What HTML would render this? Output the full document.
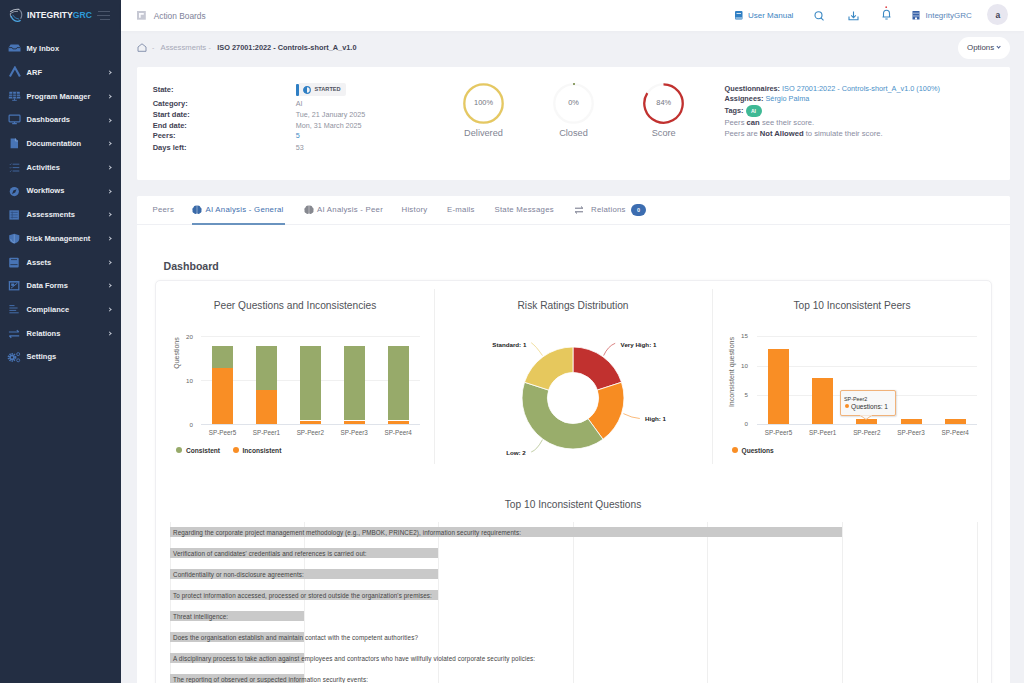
<!DOCTYPE html>
<html><head><meta charset="utf-8">
<style>
*{box-sizing:border-box;margin:0;padding:0}
html,body{width:1024px;height:683px;overflow:hidden}
body{font-family:"Liberation Sans",sans-serif;background:#f0f1f5;position:relative;color:#3f4254}
.a{position:absolute;white-space:nowrap}
#sb{position:absolute;left:0;top:0;width:121px;height:683px;background:#232e43}
#hd{position:absolute;left:121px;top:0;width:903px;height:31px;background:#fff;box-shadow:0 1px 3px rgba(0,0,0,0.025)}
.mi{position:absolute;left:26.6px;font-size:7.5px;color:#eceef4;font-weight:bold;line-height:10px;white-space:nowrap}
.chev{position:absolute;left:108px;width:3px;height:3px;border-right:0.9px solid #c3c8d3;border-top:0.9px solid #c3c8d3;transform:rotate(45deg)}
.card{position:absolute;background:#fff;border-radius:1.5px}
.lbl{position:absolute;left:152.7px;font-size:7.5px;font-weight:bold;color:#3f4254;line-height:9px}
.val{position:absolute;left:295.7px;font-size:7.2px;color:#8f92a0;line-height:9px}
.tab{position:absolute;top:204.6px;font-size:7.8px;letter-spacing:0.25px;color:#7e8299;line-height:10px;white-space:nowrap}
.gl{position:absolute;height:1px;background:#ededed}
.vl{position:absolute;width:1px;background:#efefef}
.ax{position:absolute;font-size:6.2px;color:#666;line-height:8px;white-space:nowrap}
.row{position:absolute;left:170px;height:9.9px;background:#c9c9c9}
.rt{position:absolute;left:173px;font-size:6.3px;letter-spacing:0.1px;color:#444;line-height:9px;white-space:nowrap}
.ttl{position:absolute;font-size:10.2px;color:#505258;line-height:12px;white-space:nowrap;text-align:center}
</style></head><body>

<div id="sb">
<svg class="a" style="left:9px;top:8px" width="15" height="15" viewBox="0 0 15 15">
<path d="M9.9 1.2 Q14.6 5.2 11.6 10.8" stroke="#7a8599" stroke-width="1.1" fill="none"/>
<path d="M1.2 3.8 Q5 0.6 10 1.4" stroke="#b9bfca" stroke-width="1.2" fill="none"/>
<path d="M1.6 5.4 Q5 2.9 9 3.3" stroke="#9aa2b0" stroke-width="0.9" fill="none"/>
<path d="M1.5 5 Q0.8 7.5 2.2 9.5" stroke="#8c95a5" stroke-width="1.1" fill="none"/>
<path d="M2 8 Q3.8 12.8 8.3 13.4 Q10.3 13.3 11.6 12.2" stroke="#4ba5e2" stroke-width="1.3" fill="none"/>
<path d="M3.6 6.8 Q5.6 10.8 10.2 11.2" stroke="#3a85c0" stroke-width="0.9" fill="none"/>
</svg>
<div class="a" style="left:26.6px;top:10.4px;font-size:9.2px;font-weight:bold;color:#f2f3f7;line-height:10px;transform:scaleX(0.935);transform-origin:0 0">INTEGRITY<span style="color:#2d9ad9">GRC</span></div>
<div class="a" style="left:98px;top:11px;width:12px;height:1px;background:#4b566b"></div>
<div class="a" style="left:96.5px;top:15px;width:13.5px;height:1px;background:#4b566b"></div>
<div class="a" style="left:100px;top:19px;width:10px;height:1px;background:#4b566b"></div>
<svg class="a" style="left:7px;top:42.3px" width="15" height="13" viewBox="0 0 15 13"><path d="M1.6 5.6 L3.6 2.4 H11.5 L13.5 5.6 V9.6 H1.6Z" fill="#4874b5"/><path d="M1.6 5.6 H5.1 L5.9 6.9 H9.2 L10 5.6 H13.5" stroke="#232e43" stroke-width="0.9" fill="none"/></svg>
<div class="mi" style="top:44.2px">My Inbox</div>
<svg class="a" style="left:7px;top:66.0px" width="15" height="13" viewBox="0 0 15 13"><path d="M2.9 10.6 L7.9 1.6 L12.9 10.6" stroke="#4874b5" stroke-width="2.1" fill="none"/></svg>
<div class="mi" style="top:68.0px">ARF</div>
<div class="chev" style="top:71.1px"></div>
<svg class="a" style="left:7px;top:89.7px" width="15" height="13" viewBox="0 0 15 13"><path d="M2.4 1.8 H12.7 L13.4 8.4 H1.7Z" fill="#4874b5"/><path d="M2 4.2 H13.1 M2 6.3 H13.1 M5.7 1.8 V8.4 M9.4 1.8 V8.4" stroke="#232e43" stroke-width="0.8"/><path d="M7.5 8.4 V10.2 M5.2 10.3 H9.8" stroke="#4874b5" stroke-width="0.9"/></svg>
<div class="mi" style="top:91.6px">Program Manager</div>
<div class="chev" style="top:94.8px"></div>
<svg class="a" style="left:7px;top:113.4px" width="15" height="13" viewBox="0 0 15 13"><rect x="2.1" y="2.1" width="10.9" height="6.8" rx="0.8" fill="none" stroke="#4874b5" stroke-width="1.2"/><path d="M7.5 8.9 V10.4 M5.2 10.6 H9.8" stroke="#4874b5" stroke-width="1.1"/></svg>
<div class="mi" style="top:115.3px">Dashboards</div>
<div class="chev" style="top:118.5px"></div>
<svg class="a" style="left:7px;top:137.1px" width="15" height="13" viewBox="0 0 15 13"><path d="M3.6 1.4 H8.6 L11 3.8 V11.3 H3.6Z" fill="#4874b5"/><path d="M8.4 1.4 V4 H11" stroke="#8fb0dc" stroke-width="0.6" fill="none"/></svg>
<div class="mi" style="top:139.0px">Documentation</div>
<div class="chev" style="top:142.2px"></div>
<svg class="a" style="left:7px;top:160.8px" width="15" height="13" viewBox="0 0 15 13"><path d="M2.8 3.2 L3.4 3.8 L4.4 2.6 M2.8 6.6 L3.4 7.2 L4.4 6 M2.8 10 L3.4 10.6 L4.4 9.4" stroke="#4874b5" stroke-width="0.6" fill="none"/><path d="M5.6 3.2 H12.3 M5.6 6.6 H12.3 M5.6 10 H12.3" stroke="#4874b5" stroke-width="0.8"/></svg>
<div class="mi" style="top:162.8px">Activities</div>
<div class="chev" style="top:165.9px"></div>
<svg class="a" style="left:7px;top:184.5px" width="15" height="13" viewBox="0 0 15 13"><circle cx="7.3" cy="6.6" r="4.6" fill="#4874b5"/><path d="M5 8.9 L6.4 5.5 L9.6 4.3 L8.2 7.6Z" fill="#232e43"/></svg>
<div class="mi" style="top:186.4px">Workflows</div>
<div class="chev" style="top:189.6px"></div>
<svg class="a" style="left:7px;top:208.2px" width="15" height="13" viewBox="0 0 15 13"><rect x="2.4" y="2.3" width="9.5" height="9.3" fill="#4874b5"/><path d="M3.6 4.4 H10.7 M3.6 6.9 H10.7 M3.6 9.4 H10.7 M5.2 3.5 V10.5" stroke="#2c4a7a" stroke-width="0.7"/></svg>
<div class="mi" style="top:210.1px">Assessments</div>
<div class="chev" style="top:213.3px"></div>
<svg class="a" style="left:7px;top:231.9px" width="15" height="13" viewBox="0 0 15 13"><path d="M7.25 1.7 L12.3 3.2 V6.5 Q12.3 10.2 7.25 11.8 Q2.2 10.2 2.2 6.5 V3.2Z" fill="#4874b5"/><path d="M7.25 2.6 V10.9 Q4 9.8 3.6 7" stroke="#8fb0dc" stroke-width="0.5" fill="none"/></svg>
<div class="mi" style="top:233.8px">Risk Management</div>
<div class="chev" style="top:237.0px"></div>
<svg class="a" style="left:7px;top:255.6px" width="15" height="13" viewBox="0 0 15 13"><rect x="2.2" y="1.7" width="9.5" height="9.9" rx="1" fill="#4874b5"/><path d="M3.4 8.6 H10.5 M4 3.6 H10" stroke="#232e43" stroke-width="0.8"/></svg>
<div class="mi" style="top:257.5px">Assets</div>
<div class="chev" style="top:260.7px"></div>
<svg class="a" style="left:7px;top:279.3px" width="15" height="13" viewBox="0 0 15 13"><rect x="2.4" y="2.8" width="9.4" height="8" fill="none" stroke="#4874b5" stroke-width="1.2"/><path d="M1.8 2.8 H12.3 M4 9.2 L10.5 4" stroke="#4874b5" stroke-width="1"/><rect x="4.2" y="4.5" width="3" height="2.4" fill="#4874b5"/></svg>
<div class="mi" style="top:281.2px">Data Forms</div>
<div class="chev" style="top:284.4px"></div>
<svg class="a" style="left:7px;top:303.0px" width="15" height="13" viewBox="0 0 15 13"><path d="M2.4 2.6 H7.5 M2.4 5 H10.6 M2.4 7.4 H9.2 M2.4 9.8 H11.7" stroke="#4874b5" stroke-width="0.9"/></svg>
<div class="mi" style="top:304.9px">Compliance</div>
<div class="chev" style="top:308.1px"></div>
<svg class="a" style="left:7px;top:326.7px" width="15" height="13" viewBox="0 0 15 13"><path d="M1.9 5 H11.8 M9.8 3.1 L11.8 5 M12.2 8.9 H2.3 M4.3 10.8 L2.3 8.9" stroke="#4874b5" stroke-width="1.2" fill="none"/></svg>
<div class="mi" style="top:328.6px">Relations</div>
<div class="chev" style="top:331.8px"></div>
<svg class="a" style="left:7px;top:350.4px" width="15" height="13" viewBox="0 0 15 13"><circle cx="5" cy="7.4" r="3.3" fill="none" stroke="#4874b5" stroke-width="2.2" stroke-dasharray="1.3 0.8"/><circle cx="5" cy="7.4" r="2.6" fill="#4874b5"/><circle cx="5" cy="7.4" r="1.1" fill="#232e43"/><circle cx="11.2" cy="4.1" r="1.5" fill="none" stroke="#4874b5" stroke-width="0.9"/><circle cx="11.2" cy="10.3" r="1.5" fill="none" stroke="#4874b5" stroke-width="0.9"/></svg>
<div class="mi" style="top:352.3px">Settings</div>
</div>
<div id="hd"></div>
<svg class="a" style="left:137px;top:10.8px" width="9" height="9" viewBox="0 0 9 9"><rect x="0" y="0" width="8.8" height="8.7" fill="#c6c8d3"/><path d="M2 2.1 H6.8 V3.8 H3.7 V6.8 H2Z" fill="#fbfbfe"/></svg>
<div class="a" style="left:153.7px;top:10.65px;font-size:8.35px;color:#7e8299;line-height:10px">Action Boards</div>
<svg class="a" style="left:735px;top:10.5px" width="8" height="9" viewBox="0 0 8 9"><rect x="0" y="0" width="7.5" height="8.5" rx="1" fill="#2f7fc4"/><path d="M1.5 2.5H6M0.5 7H7" stroke="#fff" stroke-width="0.8"/></svg>
<div class="a" style="left:748px;top:11.4px;font-size:8px;color:#3d84c2;line-height:10px">User Manual</div>
<svg class="a" style="left:813.5px;top:10.5px" width="11" height="10" viewBox="0 0 11 10"><circle cx="4.5" cy="4.2" r="3.5" stroke="#3a88c3" stroke-width="1.1" fill="none"/><path d="M7 6.8L9.5 9.3" stroke="#3a88c3" stroke-width="1.1"/></svg>
<svg class="a" style="left:847.5px;top:10.5px" width="11" height="10" viewBox="0 0 11 10"><path d="M5.5 0.5V6.5M3.2 4.3L5.5 6.6L7.8 4.3M1 5.5V8.8H10V5.5" stroke="#3a88c3" stroke-width="1.1" fill="none"/></svg>
<svg class="a" style="left:881px;top:6.3px" width="11" height="15" viewBox="0 0 11 15"><circle cx="5.2" cy="1.2" r="0.9" fill="#e0474c"/><path d="M2.5 11V7.5Q2.5 4.3 5.5 4.3Q8.5 4.3 8.5 7.5V11H1.5H9.5M4.3 13H6.7" stroke="#3a88c3" stroke-width="1.1" fill="none"/></svg>
<svg class="a" style="left:912px;top:10.5px" width="8" height="9" viewBox="0 0 8 9"><rect x="0.5" y="0" width="7" height="8.5" fill="#3862a8"/><path d="M2 1.5V3M4 1.5V3M6 1.5V3M2 4.2V5.7M4 4.2V5.7M6 4.2V5.7" stroke="#fff" stroke-width="0.8"/><rect x="3" y="6.5" width="2" height="2" fill="#fff"/></svg>
<div class="a" style="left:925.5px;top:11.2px;font-size:8px;color:#5b86b9;line-height:10px">IntegrityGRC</div>
<div class="a" style="left:987.3px;top:4.4px;width:21px;height:21px;border-radius:50%;background:#e8e7f0"></div>
<div class="a" style="left:987.3px;top:9.5px;width:21px;text-align:center;font-size:8.5px;font-weight:bold;color:#3f4254;line-height:10px">a</div>
<svg class="a" style="left:137px;top:42.5px" width="10" height="9" viewBox="0 0 10 9"><path d="M1 4L5 0.8L9 4V8.3H1Z" stroke="#7d8aa8" stroke-width="0.9" fill="none"/></svg>
<div class="a" style="left:152px;top:43.3px;font-size:7px;color:#b5b7c4;line-height:10px">-</div>
<div class="a" style="left:160.5px;top:43.3px;font-size:7.7px;color:#a7a9b8;line-height:10px">Assessments</div>
<div class="a" style="left:208.5px;top:43.3px;font-size:7px;color:#b5b7c4;line-height:10px">-</div>
<div class="a" style="left:217.3px;top:43.3px;font-size:7.35px;color:#3f4254;font-weight:bold;line-height:10px">ISO 27001:2022 - Controls-short_A_v1.0</div>
<div class="a" style="left:958px;top:37px;width:52px;height:22px;border-radius:11px;background:#fff"></div>
<div class="a" style="left:967px;top:43.4px;font-size:7.9px;color:#3f4254;line-height:10px">Options</div>
<div class="a" style="left:997.2px;top:45.3px;width:3.2px;height:3.2px;border-right:1.2px solid #44598a;border-bottom:1.2px solid #44598a;transform:rotate(45deg)"></div>
<div class="card" style="left:137px;top:67px;width:873px;height:113px"></div>
<div class="lbl" style="top:84.8px">State:</div>
<div class="lbl" style="top:98.9px">Category:</div>
<div class="lbl" style="top:110.2px">Start date:</div>
<div class="lbl" style="top:120.9px">End date:</div>
<div class="lbl" style="top:131.1px">Peers:</div>
<div class="lbl" style="top:142.8px">Days left:</div>
<div class="a" style="left:295.5px;top:83.5px;width:3px;height:12px;background:#2f7fc4;border-radius:1px"></div>
<div class="a" style="left:298.5px;top:83px;width:47px;height:12.7px;background:#f2f2f4;border-radius:0 2px 2px 0"></div>
<svg class="a" style="left:302.5px;top:85.5px" width="8" height="8" viewBox="0 0 8 8"><circle cx="4" cy="4" r="3.3" fill="none" stroke="#2f7fc4" stroke-width="1.2"/><path d="M4 0.7A3.3 3.3 0 0 0 4 7.3Z" fill="#2f7fc4"/></svg>
<div class="a" style="left:314.6px;top:85.8px;font-size:5.6px;color:#50535f;font-weight:bold;letter-spacing:0px;line-height:7px">STARTED</div>
<div class="val" style="top:98.9px;color:#8f92a0">AI</div>
<div class="val" style="top:110.2px;color:#8f92a0">Tue, 21 January 2025</div>
<div class="val" style="top:120.9px;color:#8f92a0">Mon, 31 March 2025</div>
<div class="val" style="top:131.1px;color:#3d8ac4">5</div>
<div class="val" style="top:142.8px;color:#8f92a0">53</div>
<svg class="a" style="left:462.0px;top:81.7px" width="43.0" height="43.0" viewBox="0 0 43.00 43.00"><circle cx="21.5" cy="21.5" r="19.2" fill="none" stroke="#f8f8f8" stroke-width="2.3"/><circle cx="21.5" cy="21.5" r="19.2" fill="none" stroke="#e5c862" stroke-width="2.3"/></svg>
<svg class="a" style="left:552.0px;top:81.7px" width="43.0" height="43.0" viewBox="0 0 43.00 43.00"><circle cx="21.5" cy="21.5" r="19.2" fill="none" stroke="#f8f8f8" stroke-width="2.3"/></svg>
<div class="a" style="left:572.5px;top:83.2px;width:2px;height:2px;background:#8fa06a"></div>
<svg class="a" style="left:642.2px;top:81.7px" width="43.0" height="43.0" viewBox="0 0 43.00 43.00"><circle cx="21.5" cy="21.5" r="19.2" fill="none" stroke="#f8f8f8" stroke-width="2.3"/><path d="M21.5 2.3000000000000007 A19.2 19.2 0 1 1 5.29 11.21" fill="none" stroke="#c1312f" stroke-width="2.3"/></svg>
<div class="a" style="left:463.5px;top:98.6px;width:40px;text-align:center;font-size:7.4px;color:#73767f;line-height:8px">100%</div>
<div class="a" style="left:553.5px;top:98.6px;width:40px;text-align:center;font-size:7.4px;color:#73767f;line-height:8px">0%</div>
<div class="a" style="left:643.7px;top:98.6px;width:40px;text-align:center;font-size:7.4px;color:#73767f;line-height:8px">84%</div>
<div class="a" style="left:453.5px;top:127.5px;width:60px;text-align:center;font-size:9.2px;color:#818492;line-height:10px">Delivered</div>
<div class="a" style="left:543.5px;top:127.5px;width:60px;text-align:center;font-size:9.2px;color:#818492;line-height:10px">Closed</div>
<div class="a" style="left:633.7px;top:127.5px;width:60px;text-align:center;font-size:9.2px;color:#818492;line-height:10px">Score</div>
<div class="a" style="left:724.5px;top:84px;font-size:7.3px;line-height:9px;color:#3f4254"><b>Questionnaires:</b> <span style="color:#4a90c8">ISO 27001:2022 - Controls-short_A_v1.0 (100%)</span></div>
<div class="a" style="left:724.5px;top:94.3px;font-size:7.3px;line-height:9px;color:#3f4254"><b>Assignees:</b> <span style="color:#4a90c8">Sérgio Palma</span></div>
<div class="a" style="left:724.5px;top:106px;font-size:7.3px;line-height:9px;color:#3f4254"><b>Tags:</b></div>
<div class="a" style="left:745.5px;top:104.5px;width:16px;height:12px;border-radius:6px;background:#3fb995;color:#fff;font-size:5px;font-weight:bold;text-align:center;line-height:12px">AI</div>
<div class="a" style="left:724.5px;top:118.3px;font-size:7.65px;line-height:9px;color:#8a8d9f">Peers <b style="color:#3f4254">can</b> see their score.</div>
<div class="a" style="left:724.5px;top:128.5px;font-size:7.65px;line-height:9px;color:#8a8d9f">Peers are <b style="color:#3f4254">Not Allowed</b> to simulate their score.</div>
<div class="card" style="left:137px;top:195.5px;width:873px;height:500px"></div>
<div class="a" style="left:137px;top:223.7px;width:873px;height:1px;background:#eff0f4"></div>
<div class="tab" style="left:152.5px">Peers</div>
<svg class="a" style="left:192.4px;top:205.2px" width="10" height="10" viewBox="0 0 10 10"><path d="M4.8 0.6C3 0.3 1.8 1.2 1.5 2.4C0.4 2.8 0.1 4.3 0.6 5.2C0.1 6.3 0.8 7.7 1.9 8C2.4 8.9 3.8 9.2 4.8 8.6Z M5.2 0.6C7 0.3 8.2 1.2 8.5 2.4C9.6 2.8 9.9 4.3 9.4 5.2C9.9 6.3 9.2 7.7 8.1 8C7.6 8.9 6.2 9.2 5.2 8.6Z" fill="#3a6aa8"/></svg>
<div class="tab" style="left:205.5px;color:#3f6fae">AI Analysis - General</div>
<div class="a" style="left:192px;top:222.6px;width:93px;height:2px;background:#6a93bf"></div>
<svg class="a" style="left:304px;top:205px" width="10" height="10" viewBox="0 0 10 10"><path d="M4.8 0.6C3 0.3 1.8 1.2 1.5 2.4C0.4 2.8 0.1 4.3 0.6 5.2C0.1 6.3 0.8 7.7 1.9 8C2.4 8.9 3.8 9.2 4.8 8.6Z M5.2 0.6C7 0.3 8.2 1.2 8.5 2.4C9.6 2.8 9.9 4.3 9.4 5.2C9.9 6.3 9.2 7.7 8.1 8C7.6 8.9 6.2 9.2 5.2 8.6Z" fill="#86888f"/></svg>
<div class="tab" style="left:317px">AI Analysis - Peer</div>
<div class="tab" style="left:401.5px">History</div>
<div class="tab" style="left:447px">E-mails</div>
<div class="tab" style="left:494.5px">State Messages</div>
<svg class="a" style="left:574px;top:205px" width="10" height="10" viewBox="0 0 10 10"><path d="M1 3.2H8.8M7 1.5L8.8 3.2M9 6.8H1.2M3 8.5L1.2 6.8" stroke="#5e6278" stroke-width="0.9" fill="none"/></svg>
<div class="tab" style="left:591px">Relations</div>
<div class="a" style="left:631.3px;top:203.5px;width:14.6px;height:12px;border-radius:6px;background:#3c6db0;color:#fff;font-size:5.5px;font-weight:bold;text-align:center;line-height:12px">0</div>
<div class="a" style="left:163.5px;top:260px;font-size:10.6px;font-weight:bold;color:#494b56;line-height:12px">Dashboard</div>
<div class="a" style="left:155px;top:280px;width:837px;height:420px;border:1px solid #efeff2;border-radius:5px;background:#fff;box-shadow:0 0 3px rgba(0,0,0,0.035)"></div>
<div class="vl" style="left:434px;top:289px;height:175px"></div>
<div class="vl" style="left:712px;top:289px;height:175px"></div>
<div class="ttl" style="left:195px;width:200px;top:299.8px">Peer Questions and Inconsistencies</div>
<div class="ttl" style="left:473px;width:200px;top:299.8px">Risk Ratings Distribution</div>
<div class="ttl" style="left:752px;width:200px;top:299.8px">Top 10 Inconsistent Peers</div>
<div class="gl" style="left:200.5px;top:424px;width:219.5px;background:#dfe3ea"></div>
<div class="ax" style="left:175px;width:18px;text-align:right;top:420.5px">0</div>
<div class="gl" style="left:200.5px;top:380px;width:219.5px;background:#f0f0f0"></div>
<div class="ax" style="left:175px;width:18px;text-align:right;top:376.5px">10</div>
<div class="gl" style="left:200.5px;top:336px;width:219.5px;background:#f0f0f0"></div>
<div class="ax" style="left:175px;width:18px;text-align:right;top:332.5px">20</div>
<div class="ax" style="left:137px;top:348.6px;width:80px;text-align:center;font-size:7px;transform:rotate(-90deg)">Questions</div>
<div class="a" style="left:211.9px;top:345.9px;width:21.3px;height:21.7px;background:#97aa6a"></div>
<div class="a" style="left:211.9px;top:368.1px;width:21.3px;height:56.4px;background:#f98e25"></div>
<div class="ax" style="left:202.5px;width:40px;text-align:center;top:429px;font-size:6.3px">SP-Peer5</div>
<div class="a" style="left:255.8px;top:345.9px;width:21.3px;height:43.7px;background:#97aa6a"></div>
<div class="a" style="left:255.8px;top:390.1px;width:21.3px;height:34.4px;background:#f98e25"></div>
<div class="ax" style="left:246.4px;width:40px;text-align:center;top:429px;font-size:6.3px">SP-Peer1</div>
<div class="a" style="left:299.7px;top:345.9px;width:21.3px;height:74.5px;background:#97aa6a"></div>
<div class="a" style="left:299.7px;top:420.9px;width:21.3px;height:3.6px;background:#f98e25"></div>
<div class="ax" style="left:290.3px;width:40px;text-align:center;top:429px;font-size:6.3px">SP-Peer2</div>
<div class="a" style="left:343.6px;top:345.9px;width:21.3px;height:74.5px;background:#97aa6a"></div>
<div class="a" style="left:343.6px;top:420.9px;width:21.3px;height:3.6px;background:#f98e25"></div>
<div class="ax" style="left:334.2px;width:40px;text-align:center;top:429px;font-size:6.3px">SP-Peer3</div>
<div class="a" style="left:387.5px;top:345.9px;width:21.3px;height:74.5px;background:#97aa6a"></div>
<div class="a" style="left:387.5px;top:420.9px;width:21.3px;height:3.6px;background:#f98e25"></div>
<div class="ax" style="left:378.1px;width:40px;text-align:center;top:429px;font-size:6.3px">SP-Peer4</div>
<div class="a" style="left:175.8px;top:447px;width:6px;height:6px;border-radius:50%;background:#97aa6a"></div>
<div class="a" style="left:186px;top:445.5px;font-size:6.6px;font-weight:bold;color:#333;line-height:9px">Consistent</div>
<div class="a" style="left:233px;top:447px;width:6px;height:6px;border-radius:50%;background:#f98e25"></div>
<div class="a" style="left:242.5px;top:445.5px;font-size:6.6px;font-weight:bold;color:#333;line-height:9px">Inconsistent</div>
<svg class="a" style="left:520.0px;top:344.6px" width="106.0" height="106.0" viewBox="520.0 344.6 106.0 106.0"><path d="M573.00 346.60 A51.0 51.0 0 0 1 621.50 381.84 L597.35 389.69 A25.6 25.6 0 0 0 573.00 372.00Z" fill="#c1312f" stroke="#fff" stroke-width="0.8"/><path d="M621.50 381.84 A51.0 51.0 0 0 1 602.98 438.86 L588.05 418.31 A25.6 25.6 0 0 0 597.35 389.69Z" fill="#f78c22" stroke="#fff" stroke-width="0.8"/><path d="M602.98 438.86 A51.0 51.0 0 0 1 524.50 381.84 L548.65 389.69 A25.6 25.6 0 0 0 588.05 418.31Z" fill="#99ad6b" stroke="#fff" stroke-width="0.8"/><path d="M524.50 381.84 A51.0 51.0 0 0 1 573.00 346.60 L573.00 372.00 A25.6 25.6 0 0 0 548.65 389.69Z" fill="#e6c85d" stroke="#fff" stroke-width="0.8"/></svg>
<svg class="a" style="left:0;top:0" width="1024" height="683"><path d="M603.6 355.6 Q608 346 615.2 343.3" stroke="#c1312f" stroke-width="0.6" fill="none"/><path d="M542.5 355.6 Q536 346 531.2 342.7" stroke="#e6c85d" stroke-width="0.6" fill="none"/><path d="M623.4 413.6 Q632 418 639.8 418.5" stroke="#f78c22" stroke-width="0.6" fill="none"/><path d="M542.5 439.6 Q537 450 531.2 452" stroke="#99ad6b" stroke-width="0.6" fill="none"/></svg>
<div class="ax" style="left:620.6px;top:340.5px;font-weight:bold;color:#222;font-size:6.2px">Very High: 1</div>
<div class="ax" style="left:492.3px;top:340.5px;font-weight:bold;color:#222;font-size:6.2px">Standard: 1</div>
<div class="ax" style="left:645px;top:415.3px;font-weight:bold;color:#222;font-size:6.2px">High: 1</div>
<div class="ax" style="left:506.2px;top:449px;font-weight:bold;color:#222;font-size:6.2px">Low: 2</div>
<div class="gl" style="left:757px;top:424px;width:220px;background:#dfe3ea"></div>
<div class="ax" style="left:730px;width:18px;text-align:right;top:420.4px">0</div>
<div class="gl" style="left:757px;top:395px;width:220px;background:#f0f0f0"></div>
<div class="ax" style="left:730px;width:18px;text-align:right;top:391.1px">5</div>
<div class="gl" style="left:757px;top:366px;width:220px;background:#f0f0f0"></div>
<div class="ax" style="left:730px;width:18px;text-align:right;top:361.7px">10</div>
<div class="gl" style="left:757px;top:336px;width:220px;background:#f0f0f0"></div>
<div class="ax" style="left:730px;width:18px;text-align:right;top:332.4px">15</div>
<div class="ax" style="left:692.4px;top:368.2px;width:80px;text-align:center;font-size:7.1px;transform:rotate(-90deg)">Inconsistent questions</div>
<div class="a" style="left:768.0px;top:348.7px;width:21px;height:75.7px;background:#f98e25"></div>
<div class="ax" style="left:758.5px;width:40px;text-align:center;top:429.3px;font-size:6.3px">SP-Peer5</div>
<div class="a" style="left:812.1px;top:378.1px;width:21px;height:46.3px;background:#f98e25"></div>
<div class="ax" style="left:802.6px;width:40px;text-align:center;top:429.3px;font-size:6.3px">SP-Peer1</div>
<div class="a" style="left:856.3px;top:419.1px;width:21px;height:5.3px;background:#f98e25"></div>
<div class="ax" style="left:846.8px;width:40px;text-align:center;top:429.3px;font-size:6.3px">SP-Peer2</div>
<div class="a" style="left:900.5px;top:419.1px;width:21px;height:5.3px;background:#f98e25"></div>
<div class="ax" style="left:891.0px;width:40px;text-align:center;top:429.3px;font-size:6.3px">SP-Peer3</div>
<div class="a" style="left:944.6px;top:419.1px;width:21px;height:5.3px;background:#f98e25"></div>
<div class="ax" style="left:935.1px;width:40px;text-align:center;top:429.3px;font-size:6.3px">SP-Peer4</div>
<div class="a" style="left:839.5px;top:390px;width:56px;height:26px;border:1px solid #f0b27a;border-radius:2px;background:#f8f8f8;box-shadow:0.5px 0.5px 1.5px rgba(0,0,0,0.12)"></div>
<svg class="a" style="left:860px;top:414px" width="12" height="6" viewBox="0 0 12 6"><path d="M0.5 1.5L6 5.5L11.5 1.5" fill="#f8f8f8" stroke="#f0b27a" stroke-width="0.9"/><rect x="0" y="0" width="12" height="1.5" fill="#f8f8f8"/></svg>
<div class="a" style="left:844px;top:395.5px;font-size:5.4px;color:#333;line-height:7px">SP-Peer2</div>
<div class="a" style="left:844.5px;top:404.3px;width:4px;height:4px;border-radius:50%;background:#f98e25"></div>
<div class="a" style="left:851px;top:402px;font-size:6.6px;color:#333;line-height:9px">Questions: 1</div>
<div class="a" style="left:731.5px;top:446.8px;width:6px;height:6px;border-radius:50%;background:#f98e25"></div>
<div class="a" style="left:741.5px;top:445.5px;font-size:6.6px;font-weight:bold;color:#333;line-height:9px">Questions</div>
<div class="ttl" style="left:473px;width:200px;top:498.5px">Top 10 Inconsistent Questions</div>
<div class="vl" style="left:170px;top:522px;height:170px"></div>
<div class="vl" style="left:304px;top:522px;height:170px"></div>
<div class="vl" style="left:438px;top:522px;height:170px"></div>
<div class="vl" style="left:572.6px;top:522px;height:170px"></div>
<div class="vl" style="left:707.2px;top:522px;height:170px"></div>
<div class="vl" style="left:841.8px;top:522px;height:170px"></div>
<div class="vl" style="left:977.2px;top:522px;height:170px"></div>
<div class="row" style="top:527.4px;width:672px"></div>
<div class="rt" style="top:527.9px">Regarding the corporate project management methodology (e.g., PMBOK, PRINCE2), information security requirements:</div>
<div class="row" style="top:548.4px;width:268px"></div>
<div class="rt" style="top:548.9px">Verification of candidates' credentials and references is carried out:</div>
<div class="row" style="top:569.4px;width:268px"></div>
<div class="rt" style="top:569.9px">Confidentiality or non-disclosure agreements:</div>
<div class="row" style="top:590.3px;width:268px"></div>
<div class="rt" style="top:590.8px">To protect information accessed, processed or stored outside the organization's premises:</div>
<div class="row" style="top:611.3px;width:134px"></div>
<div class="rt" style="top:611.8px">Threat intelligence:</div>
<div class="row" style="top:632.3px;width:134px"></div>
<div class="rt" style="top:632.8px">Does the organisation establish and maintain contact with the competent authorities?</div>
<div class="row" style="top:653.3px;width:134px"></div>
<div class="rt" style="top:653.8px">A disciplinary process to take action against employees and contractors who have willfully violated corporate security policies:</div>
<div class="row" style="top:674.3px;width:134px"></div>
<div class="rt" style="top:674.8px">The reporting of observed or suspected information security events:</div>
</body></html>
